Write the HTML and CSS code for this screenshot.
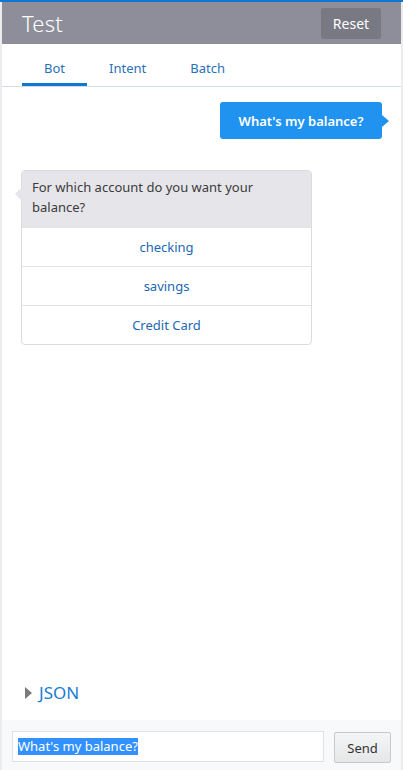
FILE: index.html
```html
<!DOCTYPE html>
<html>
<head>
<meta charset="utf-8">
<link rel="stylesheet" href="styles.css">
</head>
<body>
<div class="topbar"></div>
<div class="app">
  <header class="header">
    <h1 class="title">Test</h1>
    <button class="reset">Reset</button>
  </header>
  <nav class="tabs">
    <span class="tab active">Bot</span>
    <span class="tab">Intent</span>
    <span class="tab">Batch</span>
  </nav>
  <main class="chat">
    <div class="row-user">
      <div class="bubble-user">What's my balance?</div>
    </div>
    <div class="row-bot">
      <div class="card">
        <div class="card-head">For which account do you want your balance?</div>
        <div class="option">checking</div>
        <div class="option">savings</div>
        <div class="option">Credit Card</div>
      </div>
    </div>
  </main>
  <div class="json">
    <span class="caret"></span>
    <span class="json-label">JSON</span>
  </div>
  <footer class="footer">
    <div class="input"><span class="sel">What's my balance?</span></div>
    <button class="send">Send</button>
  </footer>
</div>
</body>
</html>
```
FILE: styles.css
```css
* { box-sizing: border-box; }
html, body { margin: 0; padding: 0; }
body {
  background: #ececec;
  font-family: "Noto Sans", "Open Sans", sans-serif;
  height: 770px;
  overflow: hidden;
}
.topbar { height: 2px; background: #0d78d0; }
.app {
  margin: 0 2px;
  background: #fff;
  height: 768px;
  display: flex;
  flex-direction: column;
}
.header {
  height: 42px;
  background: #8d8e99;
  display: flex;
  align-items: center;
  justify-content: space-between;
  padding: 0 20px 0 20px;
}
.title {
  margin: 0;
  font-weight: 300;
  font-size: 22px;
  color: #fff;
  letter-spacing: 0.2px;
}
.reset {
  width: 60px;
  height: 31px;
  margin-top: 1px;
  border: none;
  border-radius: 2px;
  background: #787983;
  color: #fff;
  font-family: inherit;
  font-size: 14px;
  padding: 0;
}
.tabs {
  height: 43px;
  display: flex;
  padding-left: 20px;
  border-bottom: 1px solid #d7dde4;
}
.tab {
  font-size: 13px;
  color: #2a70b8;
  display: flex;
  align-items: center;
  justify-content: center;
  padding: 5px 22px 0 22px;
}
.tab.active { border-bottom: 3px solid #0f78d3; padding-top: 8px; }
.chat {
  flex: 1;
  padding: 15px 19px 0 19px;
}
.row-user { display: flex; justify-content: flex-end; }
.bubble-user {
  position: relative;
  background: #1f93ef;
  color: #fff;
  font-size: 13px;
  font-weight: 600;
  height: 37px;
  width: 162px;
  border-radius: 3px;
  display: flex;
  align-items: center;
  justify-content: center;
}
.bubble-user::after {
  content: "";
  position: absolute;
  right: -7px;
  top: 13px;
  border-top: 6px solid transparent;
  border-bottom: 6px solid transparent;
  border-left: 7px solid #1f93ef;
}
.row-bot { margin-top: 31px; }
.card {
  position: relative;
  width: 291px;
  border: 1px solid #dcdcdf;
  border-radius: 4px;
  background: #fff;
}
.card::before {
  content: "";
  position: absolute;
  left: -7px;
  top: 16px;
  border-top: 7px solid transparent;
  border-bottom: 7px solid transparent;
  border-right: 7px solid #e6e6ea;
}
.card-head {
  background: #e6e6ea;
  border-radius: 3px 3px 0 0;
  color: #3a3a3a;
  font-size: 13px;
  line-height: 20px;
  padding: 6px 10px 0 10px;
  height: 56px;
}
.option {
  height: 39px;
  border-top: 1px solid #e3e3e6;
  display: flex;
  align-items: center;
  justify-content: center;
  color: #2168b4;
  font-size: 13px;
}
.json {
  height: 39px;
  display: flex;
  align-items: center;
  padding-left: 23px;
  padding-bottom: 16px;
}
.caret {
  width: 0; height: 0;
  border-top: 6px solid transparent;
  border-bottom: 6px solid transparent;
  border-left: 7px solid #7b7b7b;
  margin-right: 7px;
}
.json-label {
  color: #1a7bd3;
  font-size: 17px;
}
.footer {
  height: 50px;
  background: #f8f9fb;
  display: flex;
  align-items: flex-start;
  padding: 11px 10px 0 10px;
  gap: 10px;
}
.input {
  flex: 1;
  height: 31px;
  border: 1px solid #dde0e4;
  background: #fff;
  display: flex;
  align-items: center;
  padding-left: 5px;
}
.sel {
  background: #3391ff;
  color: #fff;
  font-size: 13px;
  line-height: 17px;
}
.send {
  width: 57px;
  height: 31px;
  border: 1px solid #c6c9cd;
  border-radius: 2px;
  background: linear-gradient(#f4f5f6, #e5e7e9);
  font-family: inherit;
  font-size: 13px;
  color: #333;
  padding: 0;
  margin-top: 1px;
}
```
